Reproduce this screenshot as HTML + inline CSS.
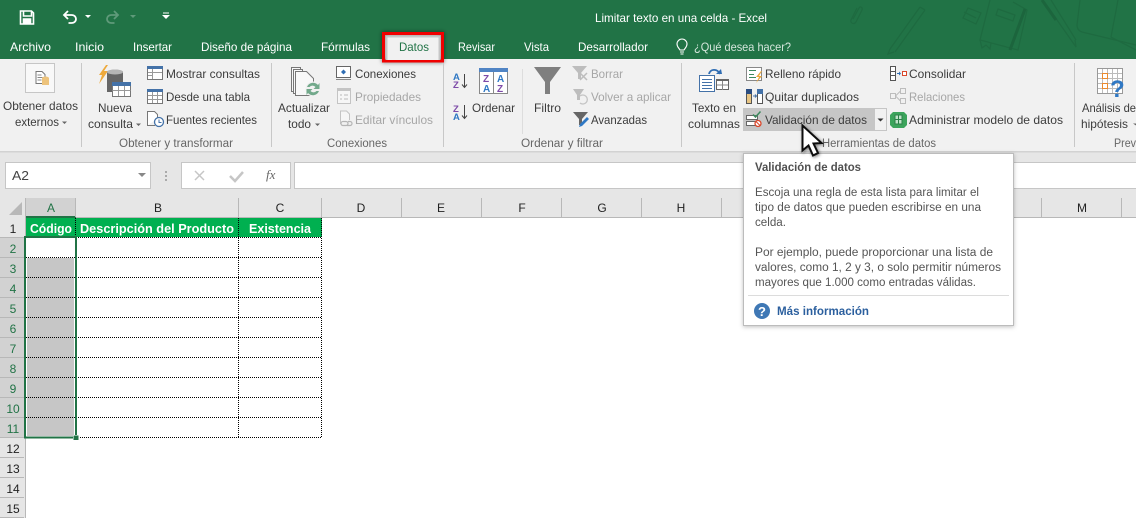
<!DOCTYPE html>
<html><head><meta charset="utf-8"><style>
html,body{margin:0;padding:0;width:1136px;height:518px;overflow:hidden;background:#fff}
svg{display:block}
text{font-family:"Liberation Sans",sans-serif;font-size:12px;fill:#3c3c3c}
.t text{fill:#fff}
.r text{fill:#3c3c3c}
.g text{fill:#666;font-size:11.5px}
.d text{fill:#a6a6a6}
.tip text{fill:#555;font-size:11.5px}
.h text{fill:#222;font-size:12px;text-anchor:middle}
.s text{fill:#217346;font-size:12px;text-anchor:middle}
</style></head><body>
<svg width="1136" height="518" viewBox="0 0 1136 518" xmlns="http://www.w3.org/2000/svg">
<defs>
<filter id="sh" x="-10%" y="-10%" width="120%" height="120%"><feDropShadow dx="0" dy="1" stdDeviation="2" flood-color="#000" flood-opacity=".25"/></filter>
<filter id="sh2" x="-30%" y="-30%" width="160%" height="160%"><feDropShadow dx="0" dy="0" stdDeviation="2" flood-color="#000" flood-opacity=".55"/></filter>
<filter id="sh3" x="-30%" y="-30%" width="160%" height="160%"><feDropShadow dx="1" dy="1" stdDeviation="1.5" flood-color="#000" flood-opacity=".5"/></filter>
</defs>
<!-- title bar -->
<rect width="1136" height="59" fill="#217346"/>
<g fill="none" stroke="#1e6a40" stroke-width="1.2">
<path d="M857 8l-6 12c-1 3 3 5 5 2l6-12c1-3-2-4-3-2l-6 11"/>
<path d="M920 7l-30 42 M925 10l-30 42 M920 7l5 3 M890 49l-2 5 6-2"/>
<path d="M968 8l13 5-5 11-13-6z M964 12l12 6"/>
<path d="M990 0l-10 40 38 10 9-40-14-8"/>
<path d="M998 9l17 6-2 6-17-6z"/>
<path d="M1025 9l-15 41" stroke-width="3" stroke="#1c653d"/>
<path d="M980 40l2 8 4-3 4 4 1-6"/>
<path d="M1043 0l33 47-1-7 M1051 0l25 40"/>
<path d="M1042 0l14 20" stroke-width="3" stroke="#1c653d"/>
<path d="M1080 0l-3 25c0 4 2 6 5 7l54 13 M1118 0l-7 37 25 13"/>
</g>
<!-- QAT -->
<g fill="none" stroke="#fff" stroke-width="1.6">
<path d="M20.500 11h11l2 2v11h-13z"/><path d="M23.500 11v5h8v-5"/><path d="M23.500 24v-5h7v5" fill="#fff"/>
<path d="M68 11l-4 4 4 4 M64.500 15h7c6 0 6 8 0 8h-3" stroke-width="1.8"/>
<path d="M114 11l4 4-4 4 M117.500 15h-6c-6 0-6 8 0 8h3" stroke="#5f9a7a" stroke-width="1.8"/>
</g>
<path d="M85 15h6l-3 3z" fill="#fff"/><path d="M130 15h6l-3 3z" fill="#5f9a7a"/>
<path d="M163 12.500h6v1h-6z M162 15h8l-4 4z" fill="#fff"/>
<g class="t">
<text x="595" y="22" textLength="172" lengthAdjust="spacingAndGlyphs">Limitar texto en una celda - Excel</text>
<text x="10" y="51" textLength="41" lengthAdjust="spacingAndGlyphs">Archivo</text>
<text x="75" y="51" textLength="29" lengthAdjust="spacingAndGlyphs">Inicio</text>
<text x="133" y="51" textLength="39" lengthAdjust="spacingAndGlyphs">Insertar</text>
<text x="201" y="51" textLength="91" lengthAdjust="spacingAndGlyphs">Diseño de página</text>
<text x="321" y="51" textLength="49" lengthAdjust="spacingAndGlyphs">Fórmulas</text>
<text x="458" y="51" textLength="37" lengthAdjust="spacingAndGlyphs">Revisar</text>
<text x="524" y="51" textLength="25" lengthAdjust="spacingAndGlyphs">Vista</text>
<text x="578" y="51" textLength="70" lengthAdjust="spacingAndGlyphs">Desarrollador</text>
<text x="694" y="51" textLength="97" lengthAdjust="spacingAndGlyphs" style="fill:#d5e6dc">¿Qué desea hacer?</text>
</g>
<path d="M680 50c-1-2-3-3-3-6a5 5 0 0 1 10 0c0 3-2 4-3 6z M680 52h4 M680.500 54h3" fill="none" stroke="#fff" stroke-width="1.100"/>
<!-- ribbon -->
<rect y="59" width="1136" height="92" fill="#f1f1f1"/>
<rect y="151" width="1136" height="47" fill="#e6e6e6"/>
<rect y="151" width="1136" height="1.500" fill="#d2d2d2"/>
<!-- Datos tab -->
<rect x="384" y="33" width="58" height="27" fill="#f1f1f1"/>
<rect x="383.500" y="33.500" width="59" height="27.500" fill="none" stroke="#e80000" stroke-width="3" filter="url(#sh2)"/>
<rect x="383.500" y="33.500" width="59" height="27.500" fill="none" stroke="#f00000" stroke-width="3"/>
<rect x="386" y="36" width="54" height="24" fill="#f1f1f1"/>
<path d="M386.500 60V36.500H440 M439.500 36.500V60" fill="none" stroke="#aaa" stroke-width="2" opacity=".6"/>
<text x="399" y="51" textLength="30" lengthAdjust="spacingAndGlyphs" style="fill:#217346">Datos</text>
<!-- separators -->
<g fill="#c8c8c8">
<rect x="81" y="63" width="1" height="84"/><rect x="271" y="63" width="1" height="84"/><rect x="443" y="63" width="1" height="84"/><rect x="681" y="63" width="1" height="84"/><rect x="1074" y="63" width="1" height="84"/><rect x="522" y="69" width="1" height="65" fill="#ddd"/>
</g>
<!-- ribbon texts -->
<g class="r">
<text x="3" y="110" textLength="75" lengthAdjust="spacingAndGlyphs">Obtener datos</text>
<text x="15" y="126" textLength="44" lengthAdjust="spacingAndGlyphs">externos</text>
<text x="98" y="112" textLength="34" lengthAdjust="spacingAndGlyphs">Nueva</text>
<text x="88" y="128" textLength="45" lengthAdjust="spacingAndGlyphs">consulta</text>
<text x="166" y="78" textLength="94" lengthAdjust="spacingAndGlyphs">Mostrar consultas</text>
<text x="166" y="101" textLength="84" lengthAdjust="spacingAndGlyphs">Desde una tabla</text>
<text x="166" y="124" textLength="91" lengthAdjust="spacingAndGlyphs">Fuentes recientes</text>
<text x="278" y="112" textLength="52" lengthAdjust="spacingAndGlyphs">Actualizar</text>
<text x="288" y="128" textLength="23" lengthAdjust="spacingAndGlyphs">todo</text>
<text x="355" y="78" textLength="61" lengthAdjust="spacingAndGlyphs">Conexiones</text>
<text x="472" y="112" textLength="43" lengthAdjust="spacingAndGlyphs">Ordenar</text>
<text x="534" y="112" textLength="27" lengthAdjust="spacingAndGlyphs">Filtro</text>
<text x="591" y="124" textLength="56" lengthAdjust="spacingAndGlyphs">Avanzadas</text>
<text x="692" y="112" textLength="44" lengthAdjust="spacingAndGlyphs">Texto en</text>
<text x="688" y="128" textLength="52" lengthAdjust="spacingAndGlyphs">columnas</text>
<text x="765" y="78" textLength="76" lengthAdjust="spacingAndGlyphs">Relleno rápido</text>
<text x="765" y="101" textLength="94" lengthAdjust="spacingAndGlyphs">Quitar duplicados</text>
<text x="909" y="78" textLength="57" lengthAdjust="spacingAndGlyphs">Consolidar</text>
<text x="909" y="124" textLength="154" lengthAdjust="spacingAndGlyphs">Administrar modelo de datos</text>
<text x="1082" y="112" textLength="54" lengthAdjust="spacingAndGlyphs">Análisis de</text>
<text x="1081" y="128" textLength="47" lengthAdjust="spacingAndGlyphs">hipótesis</text>
</g>
<g class="d">
<text x="355" y="101" textLength="66" lengthAdjust="spacingAndGlyphs">Propiedades</text>
<text x="355" y="124" textLength="78" lengthAdjust="spacingAndGlyphs">Editar vínculos</text>
<text x="591" y="78" textLength="32" lengthAdjust="spacingAndGlyphs">Borrar</text>
<text x="591" y="101" textLength="80" lengthAdjust="spacingAndGlyphs">Volver a aplicar</text>
<text x="909" y="101" textLength="56" lengthAdjust="spacingAndGlyphs">Relaciones</text>
</g>
<g class="g">
<text x="119" y="147" textLength="114" lengthAdjust="spacingAndGlyphs">Obtener y transformar</text>
<text x="327" y="147" textLength="60" lengthAdjust="spacingAndGlyphs">Conexiones</text>
<text x="521" y="147" textLength="82" lengthAdjust="spacingAndGlyphs">Ordenar y filtrar</text>
<text x="822" y="147" textLength="114" lengthAdjust="spacingAndGlyphs">Herramientas de datos</text>
<text x="1114" y="147" textLength="22" lengthAdjust="spacingAndGlyphs">Prev</text>
</g>
<!-- small carets -->
<g fill="#666">
<path d="M62 121.500h5l-2.500 2.500z M136 123.500h5l-2.500 2.500z M315 123.500h5l-2.500 2.500z M1133 123.500h3v2z"/>
</g>
<!-- Obtener datos icon -->
<rect x="25.500" y="63.500" width="29" height="29" fill="#f8f8f8" stroke="#c6c6c6"/>
<path d="M36 71.500h6l3 3v9h-9z" fill="#fff" stroke="#777"/><path d="M37.500 75h4 M37.500 77.500h5 M37.500 80h4" stroke="#888"/>
<ellipse cx="45.500" cy="78" rx="3.500" ry="1.500" fill="#edc37c"/><rect x="42" y="78" width="7" height="7" fill="#edc37c"/>
<!-- Nueva consulta icon -->
<path d="M106 65l-7 10h3l-3 9 9-13h-4l4-6z" fill="#eda93c"/>
<path d="M107 72c0-3 16-3 16 0v20h-16z" fill="#666"/><ellipse cx="115" cy="72" rx="8" ry="2.500" fill="#b5b5b5"/>
<rect x="112.500" y="82.500" width="18" height="14" fill="#fff" stroke="#777"/><rect x="112" y="82" width="19" height="4" fill="#4472a8"/>
<path d="M112.500 90.500h18 M118.500 86v10 M124.500 86v10" stroke="#999"/>
<!-- small list icons -->
<rect x="147.500" y="66.500" width="15" height="13" fill="#fff" stroke="#777"/><rect x="147" y="66" width="16" height="3" fill="#4472a8"/><path d="M152.500 69v10 M148 72.500h4 M148 75.500h4 M153 72.500h9" stroke="#999"/>
<rect x="147.500" y="89.500" width="15" height="14" fill="#fff" stroke="#777"/><rect x="147" y="89" width="16" height="3" fill="#4472a8"/><path d="M152.500 92v11 M157.500 92v11 M148 95.500h14 M148 99.500h14" stroke="#999"/>
<path d="M147.500 125.500v-14h7l3 3v4" fill="#fff" stroke="#777"/><circle cx="159" cy="122" r="4.500" fill="#fff" stroke="#4472a8" stroke-width="1.300"/><path d="M159 119.500v3h2.500" fill="none" stroke="#4472a8"/><path d="M147 125.500h8" stroke="#777"/>
<!-- Actualizar icon -->
<g fill="#f8f8f8" stroke="#777">
<path d="M291.500 67.500h9v24h-9z"/><path d="M293.500 69.500h9v24h-9z"/><path d="M295.500 71.500h11l7 7v17h-18z"/>
</g>
<circle cx="313" cy="89" r="7.500" fill="#f1f1f1"/>
<path d="M307 87a6.500 6.500 0 0 1 11-2l1.500-2v6h-6l2-2a4 4 0 0 0-6 0z M319 91a6.500 6.500 0 0 1-11 2l-1.500 2v-6h6l-2 2a4 4 0 0 0 6 0z" fill="#72a98b"/>
<!-- Conexiones small -->
<rect x="336.500" y="66.500" width="14" height="11" fill="#fff" stroke="#666"/><path d="M336 79.500h15" stroke="#888"/><path d="M343.500 69.500l2.500 2.500-2.500 2.500-2.500-2.500z" fill="#2f6db3"/>
<rect x="337.500" y="88.500" width="13" height="15" fill="#f6f6f6" stroke="#c4c4c4"/><rect x="337" y="88" width="14" height="3" fill="#c4c4c4"/><path d="M340 95h2 M344 95h4 M340 99h2 M344 99h4" stroke="#bbb"/>
<path d="M340.500 124v-13h6l3 3v6" fill="#f6f6f6" stroke="#c4c4c4"/><path d="M343 125.500h3a2 2 0 0 0 0-4h-3a2 2 0 0 0 0 4z M348 121.500h2a2 2 0 0 1 0 4h-3" fill="none" stroke="#b5b5b5" stroke-width="1.200"/>
<!-- Sort icons -->
<text x="453" y="80" style="font-size:9.500px;fill:#2f78c4;font-weight:bold">A</text><text x="453" y="88" style="font-size:9.500px;fill:#7d4aa8;font-weight:bold">Z</text>
<text x="453" y="112" style="font-size:9.500px;fill:#7d4aa8;font-weight:bold">Z</text><text x="453" y="120" style="font-size:9.500px;fill:#2f78c4;font-weight:bold">A</text>
<path d="M464.500 74v13 M462 84.500l2.500 3 2.500-3 M464.500 105v13 M462 115.500l2.500 3 2.500-3" fill="none" stroke="#444"/>
<rect x="479.500" y="69.500" width="28" height="24" fill="#fff" stroke="#888"/><rect x="479" y="68" width="29" height="4" fill="#5084c4"/><path d="M493.500 72v21" stroke="#888"/>
<text x="483" y="82" style="font-size:10px;fill:#7d4aa8;font-weight:bold">Z</text><text x="483" y="92" style="font-size:10px;fill:#2f78c4;font-weight:bold">A</text>
<text x="497" y="82" style="font-size:10px;fill:#2f78c4;font-weight:bold">A</text><text x="497" y="92" style="font-size:10px;fill:#7d4aa8;font-weight:bold">Z</text>
<!-- Filter -->
<path d="M534 67h27l-11 15v12h-5V82z" fill="#7f7f7f"/>
<path d="M572 66h15l-6 7v6h-3v-6z" fill="#bdbdbd"/><path d="M580 73l7 7 M587 73l-7 7" stroke="#bdbdbd" stroke-width="1.500"/>
<path d="M573 89h11l-4 6v5h-3v-5z" fill="#bdbdbd"/><path d="M580 103a4.500 4.500 0 1 0 0-7" fill="none" stroke="#c4c4c4" stroke-width="1.300"/>
<path d="M573 112h15l-6 7v6h-3v-6z" fill="#666"/><path d="M579 127l1-3 7-7 2 2-7 7z" fill="#2f78c4"/>
<!-- Texto en columnas -->
<path d="M709 74c1-5 8-6 11 0" fill="none" stroke="#2f6db3" stroke-width="1.800"/><path d="M716 74h6l-1-5z" fill="#2f6db3"/>
<rect x="699.500" y="75.500" width="15" height="16" fill="#fff" stroke="#4472a8"/><path d="M702 79.500h10 M702 82.500h10 M702 85.500h10 M702 88.500h10" stroke="#4472a8"/>
<rect x="716.500" y="80.500" width="12" height="9" fill="#fff" stroke="#666"/><rect x="716" y="79" width="13" height="2" fill="#666"/><path d="M722.500 81v9 M717 85h11" stroke="#888"/>
<!-- Relleno -->
<rect x="746.500" y="67.500" width="15" height="13" fill="#fff" stroke="#888"/><path d="M749 70.500h7 M749 74.500h5 M749 77.500h7" stroke="#3c8a5e"/>
<path d="M761 71l-5 6h3l-3 6 6-7h-3l3-5z" fill="#eda93c"/>
<!-- Quitar -->
<rect x="746.500" y="89.500" width="5" height="14" fill="#e8c584" stroke="#555"/><rect x="746" y="89" width="6" height="5" fill="#2b4d80"/><rect x="757.500" y="89.500" width="5" height="14" fill="#fff" stroke="#555"/><rect x="757" y="89" width="6" height="5" fill="#4472a8"/>
<path d="M753 96h3 M755 94.500l1.500 1.500-1.500 1.500" fill="none" stroke="#4472a8"/>
<!-- Validacion highlight -->
<rect x="743" y="108" width="131" height="23" fill="#c6c6c6"/>
<rect x="874.500" y="108.500" width="12" height="22" fill="#f1f1f1" stroke="#c6c6c6"/>
<path d="M877.500 118.500h6l-3 3z" fill="#333"/>
<rect x="746.500" y="115.500" width="11" height="4" fill="#fff" stroke="#666"/><rect x="746.500" y="121.500" width="9" height="4" fill="#fff" stroke="#666"/>
<path d="M753 114.500l2.500 2.500 5-5.500" fill="none" stroke="#3c8a5e" stroke-width="1.500"/>
<circle cx="758" cy="123.500" r="3" fill="#fff" stroke="#d9472b" stroke-width="1.300"/><path d="M756 121.500l4 4" stroke="#d9472b"/>
<text x="765" y="124" textLength="102" lengthAdjust="spacingAndGlyphs">Validación de datos</text>
<!-- Consolidar -->
<rect x="890.500" y="66.500" width="5" height="14" fill="#fff" stroke="#555"/><path d="M891 71.500h4 M891 75.500h4" stroke="#555"/><path d="M897 73.500h3" stroke="#2f6db3"/><path d="M899 71.500l2 2-2 2z" fill="#2f6db3"/><rect x="902.500" y="71.500" width="4" height="4" fill="#fff" stroke="#d9472b"/>
<!-- Relaciones -->
<g fill="#f1f1f1" stroke="#bdbdbd"><rect x="890.500" y="93.500" width="5" height="5"/><rect x="900.500" y="88.500" width="5" height="5"/><rect x="900.500" y="98.500" width="5" height="5"/><path d="M895.500 96l5-5 M895.500 96l5 5"/></g>
<!-- Modelo -->
<path d="M893 112h11l3 3v10l-3 3h-11l-3-3v-10z" fill="#3ca45c"/><path d="M895 115h7v9h-7z M898.500 115v9 M895 119.500h7" fill="#bfe3c9" stroke="#2b8048"/>
<!-- Analisis -->
<rect x="1097.500" y="68.500" width="25" height="25" fill="#fff" stroke="#999"/><path d="M1102.500 69v24 M1107.500 69v24 M1112.500 69v24 M1117.500 69v24 M1098 73.500h24 M1098 78.500h24 M1098 83.500h24 M1098 88.500h24" stroke="#bbb"/><rect x="1102.500" y="73.500" width="5" height="5" fill="none" stroke="#ea8a2f"/><rect x="1102.500" y="83.500" width="5" height="5" fill="none" stroke="#ea8a2f"/>
<text x="1110" y="97" style="font-size:24px;font-weight:bold;fill:#2f78c4">?</text>
<!-- formula bar -->
<rect x="5.500" y="162.500" width="145" height="26" fill="#fff" stroke="#c6c6c6"/>
<text x="12" y="180" style="font-size:13px;fill:#444" textLength="17" lengthAdjust="spacingAndGlyphs">A2</text>
<path d="M138 173h8l-4 4z" fill="#888"/>
<path d="M165 171h2v2h-2z M165 175h2v2h-2z M165 179h2v2h-2z" fill="#aaa"/>
<rect x="181.500" y="162.500" width="109" height="26" fill="#fff" stroke="#c6c6c6"/>
<path d="M195 171l9 9 M204 171l-9 9" stroke="#c6c6c6" stroke-width="1.500"/>
<path d="M230 176l5 5 8-9" fill="none" stroke="#c6c6c6" stroke-width="2.500"/>
<text x="266" y="179" style="font-family:'Liberation Serif',serif;font-style:italic;font-size:13px;fill:#666">fx</text>
<rect x="294.500" y="162.500" width="842" height="26" fill="#fff" stroke="#c6c6c6"/>
<!-- headers -->
<rect y="198" width="1136" height="20" fill="#e6e6e6"/>
<rect x="0" y="198" width="25" height="320" fill="#e6e6e6"/>
<path d="M22 202v13H9z" fill="#b8b8b8"/>
<rect x="26" y="198" width="50" height="19" fill="#d2d2d2"/>
<rect x="26" y="216" width="50" height="2" fill="#217346"/>
<g fill="#b8b8b8">
<rect x="75" y="198" width="1" height="19"/><rect x="238" y="198" width="1" height="19"/><rect x="321" y="198" width="1" height="19"/>
<rect x="401" y="198" width="1" height="19"/><rect x="481" y="198" width="1" height="19"/><rect x="561" y="198" width="1" height="19"/><rect x="641" y="198" width="1" height="19"/><rect x="721" y="198" width="1" height="19"/><rect x="1041" y="198" width="1" height="19"/><rect x="1121" y="198" width="1" height="19"/>
<rect x="76" y="217" width="1060" height="1"/>
<rect x="25" y="198" width="1" height="320"/>
</g>
<rect x="0" y="237" width="25" height="200" fill="#d2d2d2"/>
<rect x="24" y="237" width="2" height="201" fill="#217346"/>
<g fill="#b8b8b8">
<rect y="237" width="24" height="1"/><rect y="257" width="24" height="1"/><rect y="277" width="24" height="1"/><rect y="297" width="24" height="1"/><rect y="317" width="24" height="1"/><rect y="337" width="24" height="1"/><rect y="357" width="24" height="1"/><rect y="377" width="24" height="1"/><rect y="397" width="24" height="1"/><rect y="417" width="24" height="1"/><rect y="437" width="24" height="1"/><rect y="457" width="24" height="1"/><rect y="477" width="24" height="1"/><rect y="497" width="24" height="1"/><rect y="517" width="24" height="1"/>
</g>
<g class="h">
<text x="158" y="212">B</text><text x="280" y="212">C</text><text x="361" y="212">D</text><text x="441" y="212">E</text><text x="522" y="212">F</text><text x="602" y="212">G</text><text x="681" y="212">H</text><text x="1082" y="212">M</text>
<text x="13" y="233">1</text><text x="13" y="473">13</text><text x="13" y="453">12</text><text x="13" y="493">14</text><text x="13" y="513">15</text>
</g>
<g class="s">
<text x="51" y="212">A</text>
<text x="13" y="253">2</text><text x="13" y="273">3</text><text x="13" y="293">4</text><text x="13" y="313">5</text><text x="13" y="333">6</text><text x="13" y="353">7</text><text x="13" y="373">8</text><text x="13" y="393">9</text><text x="13" y="413">10</text><text x="13" y="433">11</text>
</g>
<!-- table -->
<rect x="26" y="218" width="296" height="19" fill="#00b050"/>
<rect x="27" y="258" width="47" height="178" fill="#c6c6c6"/>
<text x="30" y="233" textLength="42" lengthAdjust="spacingAndGlyphs" style="fill:#fff;font-weight:bold;font-size:13px">Código</text>
<text x="80" y="233" textLength="154" lengthAdjust="spacingAndGlyphs" style="fill:#fff;font-weight:bold;font-size:13px">Descripción del Producto</text>
<text x="249" y="233" textLength="62" lengthAdjust="spacingAndGlyphs" style="fill:#fff;font-weight:bold;font-size:13px">Existencia</text>
<g stroke="#000" stroke-dasharray="1 1" fill="none">
<path d="M76 257.500H322 M76 277.500H322 M76 297.500H322 M76 317.500H322 M76 337.500H322 M76 357.500H322 M76 377.500H322 M76 397.500H322 M76 417.500H322 M76 437.500H322 M76 237.500H322"/>
<path d="M26 257.500H75 M26 277.500H75 M26 297.500H75 M26 317.500H75 M26 337.500H75 M26 357.500H75 M26 377.500H75 M26 397.500H75 M26 417.500H75"/>
<path d="M75.500 218V237 M238.500 218V438 M321.500 218V438"/>
</g>
<rect x="25" y="237" width="51" height="200.500" fill="none" stroke="#217346" stroke-width="2"/>
<rect x="73" y="435" width="6" height="5" fill="#fff"/>
<rect x="73.500" y="435.500" width="5" height="4.500" fill="#217346"/>
<!-- tooltip -->
<rect x="743.500" y="153.500" width="270" height="172" fill="#fff" stroke="#bcbcbc" filter="url(#sh)"/>
<g class="tip">
<text x="755" y="171" textLength="106" lengthAdjust="spacingAndGlyphs" style="font-weight:bold;fill:#505050;font-size:11.5px">Validación de datos</text>
<text x="755" y="196" textLength="224" lengthAdjust="spacingAndGlyphs">Escoja una regla de esta lista para limitar el</text>
<text x="755" y="211" textLength="226" lengthAdjust="spacingAndGlyphs">tipo de datos que pueden escribirse en una</text>
<text x="755" y="226" textLength="31" lengthAdjust="spacingAndGlyphs">celda.</text>
<text x="755" y="256" textLength="238" lengthAdjust="spacingAndGlyphs">Por ejemplo, puede proporcionar una lista de</text>
<text x="755" y="271" textLength="246" lengthAdjust="spacingAndGlyphs">valores, como 1, 2 y 3, o solo permitir números</text>
<text x="755" y="286" textLength="221" lengthAdjust="spacingAndGlyphs">mayores que 1.000 como entradas válidas.</text>
</g>
<rect x="748" y="295" width="261" height="1" fill="#dcdcdc"/>
<circle cx="762" cy="311" r="8" fill="#3f78b5"/>
<text x="762" y="316" text-anchor="middle" style="font-size:13px;font-weight:bold;fill:#fff">?</text>
<text x="777" y="315" textLength="92" lengthAdjust="spacingAndGlyphs" style="font-weight:bold;fill:#2b5f9e;font-size:12px">Más información</text>
<!-- cursor -->
<path d="M802.500 125.500v25l6-5 4.500 10 5-2.500-4.500-9.500 8-.5z" fill="#fff" stroke="#111" stroke-width="2" filter="url(#sh3)"/>
</svg>
</body></html>
